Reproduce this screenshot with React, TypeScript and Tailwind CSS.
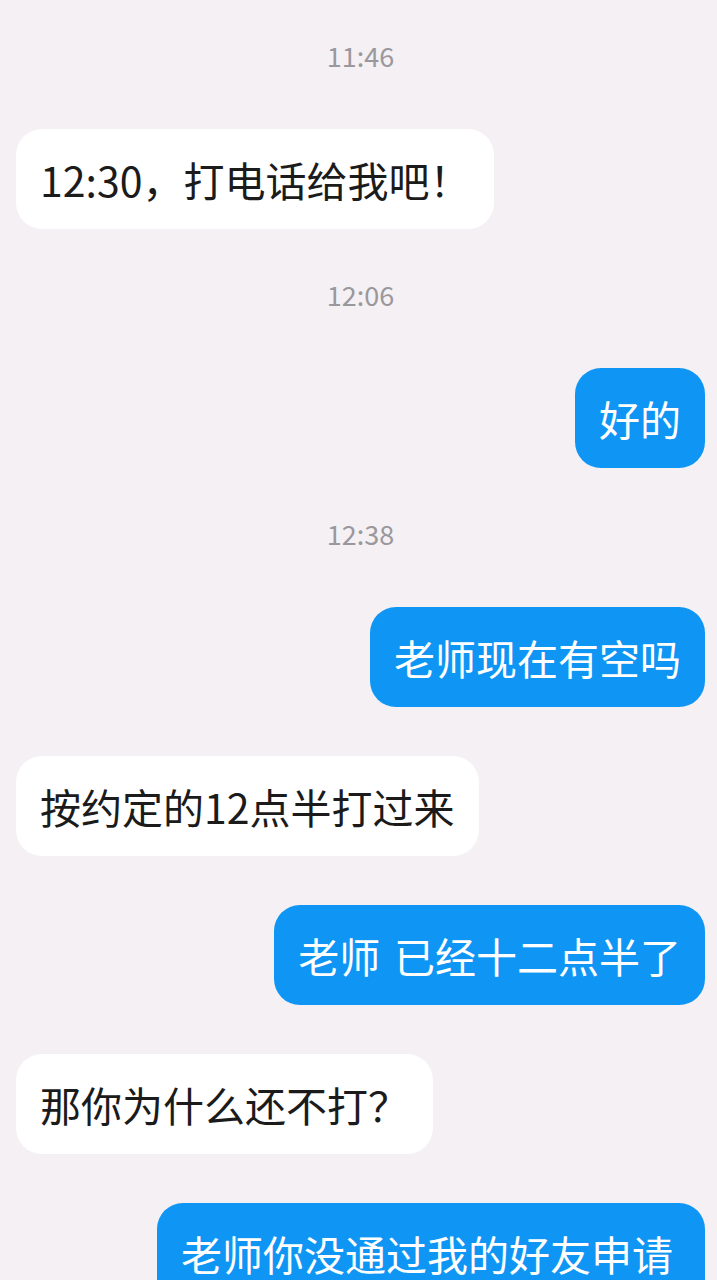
import React from 'react';

type Msg =
  | { kind: 'time'; text: string }
  | { kind: 'in'; text: string }
  | { kind: 'out'; text: string };

const messages: Msg[] = [
  { kind: 'time', text: '11:46' },
  { kind: 'in', text: '12:30，打电话给我吧！' },
  { kind: 'time', text: '12:06' },
  { kind: 'out', text: '好的' },
  { kind: 'time', text: '12:38' },
  { kind: 'out', text: '老师现在有空吗' },
  { kind: 'in', text: '按约定的12点半打过来' },
  { kind: 'out', text: '老师\u2004已经十二点半了' },
  { kind: 'in', text: '那你为什么还不打？' },
  { kind: 'out', text: '老师你没通过我的好友申请啊' },
];

function TimeStamp({ text }: { text: string }) {
  return (
    <div className="mt-[46px] mb-[53px] h-[40px] text-center text-[27px] leading-[40px] text-[#9a989c] first:mt-0">
      {text}
    </div>
  );
}

function Bubble({ text, mine }: { text: string; mine: boolean }) {
  return (
    <div className={mine ? 'flex justify-end' : 'flex justify-start'}>
      <div
        className={
          'max-w-[548px] rounded-[26px] px-6 py-[26px] text-[41px] leading-[48px] whitespace-pre-wrap ' +
          (mine ? 'bg-[#0f96f5] text-white' : 'bg-white text-[#1b1b1b]')
        }
      >
        {text}
      </div>
    </div>
  );
}

export default function App() {
  return (
    <div
      className="h-[1280px] w-full overflow-hidden bg-[#f4f0f4] pt-[36px] pl-4 pr-3"
      style={{ fontFamily: '"Noto Sans CJK SC", "Noto Sans", sans-serif' }}
    >
      <div className="flex flex-col">
        {messages.map((m, i) => {
          if (m.kind === 'time') return <TimeStamp key={i} text={m.text} />;
          const prev = messages[i - 1];
          const spaced = prev && prev.kind !== 'time';
          return (
            <div key={i} className={spaced ? 'mt-[49px]' : ''}>
              <Bubble text={m.text} mine={m.kind === 'out'} />
            </div>
          );
        })}
      </div>
    </div>
  );
}
